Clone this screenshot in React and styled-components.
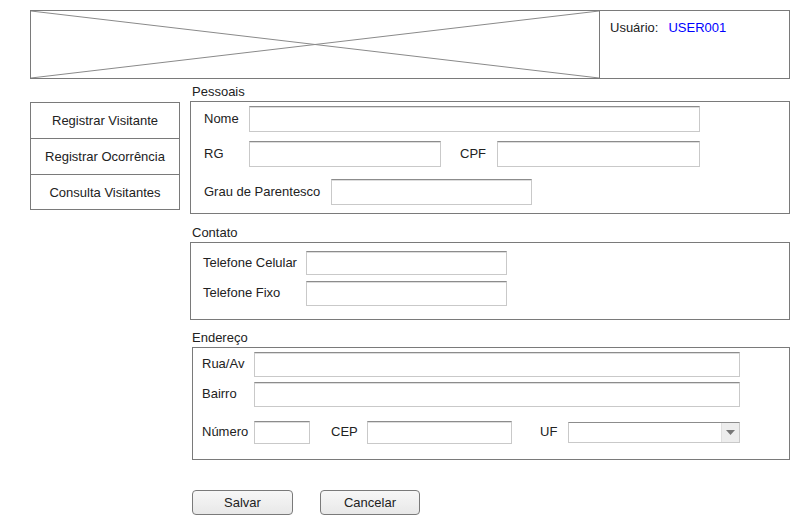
import styled, { createGlobalStyle } from "styled-components";

const GlobalStyle = createGlobalStyle`
  body {
    margin: 0;
    background: #ffffff;
    font-family: "Liberation Sans", Arial, sans-serif;
    font-size: 13px;
    color: #222222;
  }
`;

function App() {
  return (
    <StyledPage>
      <GlobalStyle />
      <StyledHeader>
        <StyledBanner>
          <svg width="100%" height="100%" viewBox="0 0 100 100" preserveAspectRatio="none">
            <line x1="0" y1="0" x2="100" y2="100" stroke="#8a8a8a" strokeWidth="1" vectorEffect="non-scaling-stroke" />
            <line x1="0" y1="100" x2="100" y2="0" stroke="#8a8a8a" strokeWidth="1" vectorEffect="non-scaling-stroke" />
          </svg>
        </StyledBanner>
        <StyledUserCell>
          <span>Usuário:</span>
          <StyledUserName>USER001</StyledUserName>
        </StyledUserCell>
      </StyledHeader>

      <StyledMain>
        <StyledSidebar>
          <StyledMenuItem>Registrar Visitante</StyledMenuItem>
          <StyledMenuItem>Registrar Ocorrência</StyledMenuItem>
          <StyledMenuItem>Consulta Visitantes</StyledMenuItem>
        </StyledSidebar>

        <StyledContent>
          <StyledCaption>Pessoais</StyledCaption>
          <StyledGroup $pad="4px 0 8px 13px">
            <StyledRow $h={26}>
              <StyledLabel $w={45}>Nome</StyledLabel>
              <StyledInput $w={451} />
            </StyledRow>
            <StyledRow $h={26} $mt={9}>
              <StyledLabel $w={45}>RG</StyledLabel>
              <StyledInput $w={192} />
              <StyledLabel $w={37} $ml={19}>CPF</StyledLabel>
              <StyledInput $w={203} />
            </StyledRow>
            <StyledRow $h={26} $mt={12}>
              <StyledLabel $w={127}>Grau de Parentesco</StyledLabel>
              <StyledInput $w={201} />
            </StyledRow>
          </StyledGroup>

          <StyledCaption $mt={12}>Contato</StyledCaption>
          <StyledGroup $pad="8px 0 13px 12px">
            <StyledRow $h={24}>
              <StyledLabel $w={103}>Telefone Celular</StyledLabel>
              <StyledInput $w={201} />
            </StyledRow>
            <StyledRow $h={25} $mt={6}>
              <StyledLabel $w={103}>Telefone Fixo</StyledLabel>
              <StyledInput $w={201} />
            </StyledRow>
          </StyledGroup>

          <StyledCaption $mt={11}>Endereço</StyledCaption>
          <StyledGroup $pad="4px 0 15px 9px" $ml={2}>
            <StyledRow $h={25}>
              <StyledLabel $w={52}>Rua/Av</StyledLabel>
              <StyledInput $w={486} />
            </StyledRow>
            <StyledRow $h={25} $mt={5}>
              <StyledLabel $w={52}>Bairro</StyledLabel>
              <StyledInput $w={486} />
            </StyledRow>
            <StyledRow $h={23} $mt={14}>
              <StyledLabel $w={52}>Número</StyledLabel>
              <StyledInput $w={56} />
              <StyledLabel $w={36} $ml={21}>CEP</StyledLabel>
              <StyledInput $w={145} />
              <StyledLabel $w={28} $ml={28}>UF</StyledLabel>
              <StyledSelect>
                <StyledSelectArrow>
                  <svg width="9" height="5" viewBox="0 0 9 5">
                    <path d="M0 0 H9 L4.5 5 Z" fill="#777777" />
                  </svg>
                </StyledSelectArrow>
              </StyledSelect>
            </StyledRow>
          </StyledGroup>

          <StyledButtons>
            <StyledButton $w={101}>Salvar</StyledButton>
            <StyledButton $w={100}>Cancelar</StyledButton>
          </StyledButtons>
        </StyledContent>
      </StyledMain>
    </StyledPage>
  );
}

const StyledPage = styled.div`
  padding: 10px 10px 0 30px;
  width: 760px;
`;

const StyledHeader = styled.div`
  display: flex;
  height: 69px;
  box-sizing: border-box;
  border: 1px solid #7a7a7a;
`;

const StyledBanner = styled.div`
  width: 568px;
  border-right: 1px solid #7a7a7a;
  display: flex;

  svg {
    display: block;
  }
`;

const StyledUserCell = styled.div`
  flex: 1;
  padding: 10px 10px;
  display: flex;
  gap: 10px;
  align-items: flex-start;
  line-height: 14px;
`;

const StyledUserName = styled.span`
  color: #0000ff;
`;

const StyledMain = styled.div`
  display: flex;
  align-items: flex-start;
`;

const StyledSidebar = styled.div`
  width: 150px;
  box-sizing: border-box;
  margin-top: 23px;
  border: 1px solid #7a7a7a;
  display: flex;
  flex-direction: column;
`;

const StyledMenuItem = styled.div`
  height: 35px;
  display: flex;
  align-items: center;
  justify-content: center;
  border-bottom: 1px solid #7a7a7a;

  &:last-child {
    border-bottom: 0;
    height: 34px;
  }
`;

const StyledContent = styled.div`
  margin-left: 10px;
  margin-top: 6px;
  width: 600px;
  display: flex;
  flex-direction: column;
`;

const StyledCaption = styled.div`
  line-height: 14px;
  margin-top: ${(p) => p.$mt || 0}px;
  margin-bottom: 2px;
  padding-left: 2px;
`;

const StyledGroup = styled.div`
  border: 1px solid #7a7a7a;
  margin-left: ${(p) => p.$ml || 0}px;
  padding: ${(p) => p.$pad};
  display: flex;
  flex-direction: column;
`;

const StyledRow = styled.div`
  display: flex;
  align-items: center;
  height: ${(p) => p.$h}px;
  margin-top: ${(p) => p.$mt || 0}px;
`;

const StyledLabel = styled.span`
  width: ${(p) => p.$w}px;
  margin-left: ${(p) => p.$ml || 0}px;
  margin-bottom: 2px;
  flex-shrink: 0;
  white-space: nowrap;
`;

const StyledInput = styled.input`
  width: ${(p) => p.$w}px;
  height: 100%;
  box-sizing: border-box;
  margin: 0;
  padding: 0 4px;
  border: 1px solid #c9c9c9;
  border-top: 1px solid #8c8c8c;
  box-shadow: inset 0 1px 0 #dddddd;
  background: #ffffff;
  font: inherit;
  outline: none;
`;

const StyledSelect = styled.div`
  width: 172px;
  height: 21px;
  box-sizing: border-box;
  border: 1px solid #c9c9c9;
  border-top: 1px solid #8c8c8c;
  background: #ffffff;
  display: flex;
  justify-content: flex-end;
`;

const StyledSelectArrow = styled.div`
  width: 17px;
  background: #ededed;
  border-left: 1px solid #e0e0e0;
  display: flex;
  align-items: center;
  justify-content: center;
`;

const StyledButtons = styled.div`
  display: flex;
  gap: 27px;
  margin-top: 30px;
  margin-left: 2px;
`;

const StyledButton = styled.button`
  width: ${(p) => p.$w}px;
  height: 25px;
  border: 1px solid #7a7a7a;
  border-radius: 4px;
  background: linear-gradient(#f7f7f7, #e8e8e8);
  font: inherit;
  color: #222222;
  padding: 0;
`;

export default App;
